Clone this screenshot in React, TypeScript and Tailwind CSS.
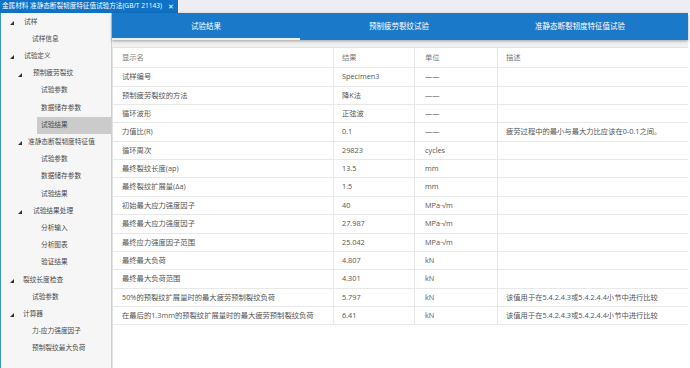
import React from "react";

const tree: { t: string; x: number; a?: number; sel?: boolean }[] = [
  { t: "试样", x: 24, a: 10 },
  { t: "试样信息", x: 32 },
  { t: "试验定义", x: 24, a: 10 },
  { t: "预制疲劳裂纹", x: 33, a: 18 },
  { t: "试验参数", x: 41 },
  { t: "数据储存参数", x: 41 },
  { t: "试验结果", x: 41, sel: true },
  { t: "准静态断裂韧度特征值", x: 28, a: 18 },
  { t: "试验参数", x: 41 },
  { t: "数据储存参数", x: 41 },
  { t: "试验结果", x: 41 },
  { t: "试验结果处理", x: 33, a: 18 },
  { t: "分析输入", x: 41 },
  { t: "分析图表", x: 41 },
  { t: "验证结果", x: 41 },
  { t: "裂纹长度检查", x: 23, a: 10 },
  { t: "试验参数", x: 32 },
  { t: "计算器", x: 23, a: 10 },
  { t: "力-应力强度因子", x: 32 },
  { t: "预制裂纹最大负荷", x: 32 },
];

const rows: [string, string, string, string][] = [
  ["试样编号", "Specimen3", "——", ""],
  ["预制疲劳裂纹的方法", "降K法", "——", ""],
  ["循环波形", "正弦波", "——", ""],
  ["力值比(R)", "0.1", "——", "疲劳过程中的最小与最大力比应该在0-0.1之间。"],
  ["循环周次", "29823", "cycles", ""],
  ["最终裂纹长度(ap)", "13.5", "mm", ""],
  ["最终裂纹扩展量(Δa)", "1.5", "mm", ""],
  ["初始最大应力强度因子", "40", "MPa·√m", ""],
  ["最终最大应力强度因子", "27.987", "MPa·√m", ""],
  ["最终应力强度因子范围", "25.042", "MPa·√m", ""],
  ["最终最大负荷", "4.807", "kN", ""],
  ["最终最大负荷范围", "4.301", "kN", ""],
  ["50%的预裂纹扩展量时的最大疲劳预制裂纹负荷", "5.797", "kN", "该值用于在5.4.2.4.3或5.4.2.4.4小节中进行比较"],
  ["在最后的1.3mm的预裂纹扩展量时的最大疲劳预制裂纹负荷", "6.41", "kN", "该值用于在5.4.2.4.3或5.4.2.4.4小节中进行比较"],
];

function Row({ c, header }: { c: [string, string, string, string]; header?: boolean }) {
  const h = header ? "h-[20.6px] text-[#7a7a7a]" : "h-[18.36px] text-[#555]";
  return (
    <div className={`flex border-b border-[#e8e8e8] ${h}`}>
      <div className="w-[220px] shrink-0 pl-[9px] flex items-center">{c[0]}</div>
      <div className="w-[81px] shrink-0 pl-[8px] flex items-center border-l border-[#e8e8e8]">{c[1]}</div>
      <div className="w-[83px] shrink-0 pl-[10px] flex items-center border-l border-[#e8e8e8]">{c[2]}</div>
      <div className="flex-1 pl-[8px] flex items-center border-l border-[#e8e8e8]">{c[3]}</div>
    </div>
  );
}

export default function App() {
  return (
    <div
      className="w-[690px] h-[368px] overflow-hidden bg-[#eeeef2] flex flex-col leading-none"
      style={{ fontFamily: "'Open Sans','Noto Sans CJK SC',sans-serif" }}
    >
      <div className="h-[13px] flex shrink-0">
        <div className="w-[178px] bg-[#0f72c6] text-white text-[6.6px] flex items-center pl-[2px]">
          <span>金属材料 准静态断裂韧度特征值试验方法(GB/T 21143)</span>
          <span className="ml-[6px] text-[7px]">✕</span>
        </div>
      </div>
      <div className="flex flex-1 border-l border-[#3d8fd6] min-h-0">
        <div className="w-[111px] shrink-0 bg-[#f6f6f6] border-r border-[#cfcfcf] pt-[0.5px] text-[6.7px] text-[#4a4a4a]">
          {tree.map((it, i) => (
            <div key={i} className="h-[17.2px] relative flex items-center">
              {it.a !== undefined && (
                <svg
                  className="absolute top-[7.5px]"
                  style={{ left: it.a - 1 }}
                  width="4"
                  height="4"
                  viewBox="0 0 4 4"
                >
                  <polygon points="4,0 4,4 0,4" fill="#333" />
                </svg>
              )}
              <div
                className={`h-full flex items-center flex-1 pl-[4px] ${it.sel ? "bg-[#cbcbcb]" : ""}`}
                style={{ marginLeft: it.x - 5 }}
              >
                {it.t}
              </div>
            </div>
          ))}
        </div>
        <div className="flex-1 flex flex-col pr-[2px] bg-white">
          <div className="h-[27px] shrink-0 bg-[#1a79c9] flex text-white text-[7.5px] shadow-[0_1px_3px_rgba(0,0,0,0.35)] relative z-10">
            <div className="w-[188px] flex items-center justify-center relative">
              试验结果
              <div className="absolute left-0 right-0 bottom-0 h-[2px] bg-[#e9eef3]" />
            </div>
            <div className="w-[198px] flex items-center justify-center">预制疲劳裂纹试验</div>
            <div className="w-[164px] flex items-center justify-center">准静态断裂韧度特征值试验</div>
          </div>
          <div className="h-[6.7px] bg-[#f1f1f1] shrink-0" />
          <div className="flex-1 bg-white border-l border-t border-[#e3e3e3] text-[7.3px]">
            <Row c={["显示名", "结果", "单位", "描述"]} header />
            {rows.map((r, i) => (
              <Row key={i} c={r} />
            ))}
          </div>
        </div>
      </div>
    </div>
  );
}
